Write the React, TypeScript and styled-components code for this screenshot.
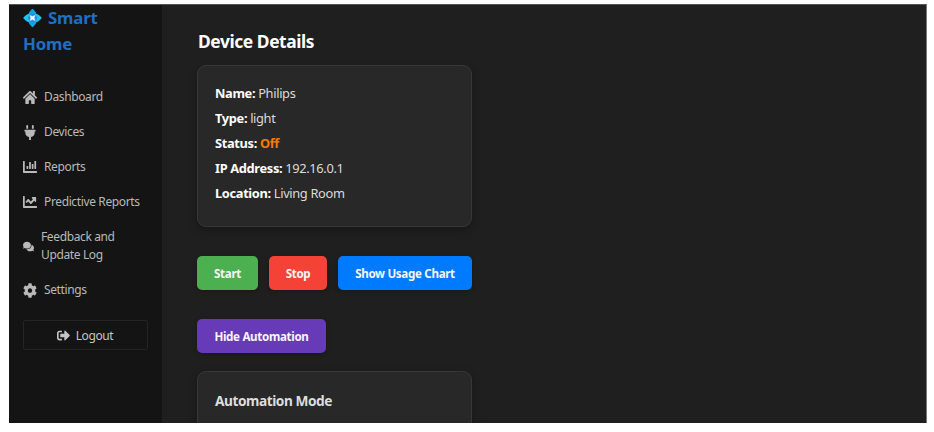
import React from "react";
import styled, { createGlobalStyle } from "styled-components";
import { FaHome, FaPlug, FaChartBar, FaChartLine, FaComments, FaCog, FaSignOutAlt } from "react-icons/fa";

const GlobalStyle = createGlobalStyle`
  * { box-sizing: border-box; }
  html, body { margin: 0; background: #fff; overflow: hidden; }
  body { font-family: "Noto Sans", sans-serif; font-size: 12px; color: #ddd; }
  h1, h2, h3, p { margin: 0; }
`;

const Frame = styled.div`
  width: 918px;
  height: 419px;
  margin: 4px 0 0 9px;
  display: flex;
  overflow: hidden;
  background: #1f1f1f;
  border-top: 1px solid #555;
  border-right: 1px solid #777;
`;

const Sidebar = styled.aside`
  width: 153px;
  flex: none;
  padding: 0 14px;
  background: #141414;
`;

const Brand = styled.h1`
  height: 52px;
  font-size: 16.8px;
  line-height: 26px;
  font-weight: 700;
  color: #1f6fc4;
  letter-spacing: -0.15px;
  svg { width: 19px; height: 20px; margin-right: 6px; vertical-align: -4px; }
`;

const Nav = styled.nav`
  display: flex;
  flex-direction: column;
  gap: 17px;
  margin-top: 31px;
`;

const NavItem = styled.a<{ $iconWidth?: number; $iconHeight?: number }>`
  display: flex;
  align-items: center;
  gap: 7px;
  color: #b9b9b9;
  font-size: 12px;
  letter-spacing: -0.37px;
  line-height: 18px;
  white-space: nowrap;
  svg {
    width: ${({ $iconWidth = 14 }) => $iconWidth}px;
    height: ${({ $iconHeight = 15 }) => $iconHeight}px;
    flex: none;
  }
`;

const Logout = styled.button`
  display: flex;
  align-items: center;
  justify-content: center;
  gap: 6px;
  width: 125px;
  height: 30px;
  margin-top: 21px;
  padding: 0 1px 0 0;
  border: 1px solid #242424;
  border-radius: 2px;
  background: #141414;
  color: #c4c4c4;
  font: 12px "Noto Sans", sans-serif;
  letter-spacing: -0.4px;
  svg { width: 13px; height: 13px; }
`;

const Content = styled.main`
  flex: 1;
  padding: 23px 0 0 35px;
`;

const Title = styled.h2`
  height: 37px;
  padding-left: 1px;
  color: #fff;
  font-size: 17.4px;
  letter-spacing: -0.42px;
  line-height: 26px;
  font-weight: 700;
`;

const Card = styled.section`
  width: 275px;
  height: 162px;
  padding: 15px 17px;
  background: #282828;
  border: 1px solid #373737;
  border-radius: 9px;
  box-shadow: 0 3px 9px rgba(0, 0, 0, 0.28);
`;

const Detail = styled.p`
  font-size: 12.85px;
  letter-spacing: -0.35px;
  line-height: 25px;
  color: #dcdcdc;
  strong { color: #fff; font-weight: 700; }
`;

const Status = styled.span`
  color: #f57c00;
  font-weight: 700;
`;

const Actions = styled.div`
  display: flex;
  gap: 11px;
  margin-top: 29px;
`;

const Button = styled.button<{ $color: string; $width: number }>`
  width: ${({ $width }) => $width}px;
  height: 34px;
  padding: 0;
  border: 0;
  border-radius: 5px;
  background: ${({ $color }) => $color};
  color: #f5f5f5;
  font: 700 11.6px "Noto Sans", sans-serif;
  letter-spacing: -0.32px;
  white-space: nowrap;
  box-shadow: 0 1px 4px rgba(0, 0, 0, 0.25);
`;

const AutomationCard = styled(Card)`
  margin-top: 18px;
`;

const CardTitle = styled.h3`
  color: #ddd;
  font-size: 13.7px;
  letter-spacing: -0.45px;
  line-height: 27px;
  font-weight: 700;
`;

const Diamond = () => (
  <svg viewBox="0 0 19 19" aria-hidden="true">
    <path d="M9.5 .3 Q10 .3 12.4 3.2 Q14.4 5.6 12.8 7.4 L9.5 9.5 L6.2 7.4 Q4.6 5.6 6.6 3.2 Q9 .3 9.5 .3 Z M9.5 18.7 Q9 18.7 6.6 15.8 Q4.6 13.4 6.2 11.6 L9.5 9.5 L12.8 11.6 Q14.4 13.4 12.4 15.8 Q10 18.7 9.5 18.7 Z" fill="#12a5df" />
    <path d="M.3 9.5 Q.3 9 3.2 6.6 Q5.6 4.6 7.4 6.2 L9.5 9.5 L7.4 12.8 Q5.6 14.4 3.2 12.4 Q.3 10 .3 9.5 Z M18.7 9.5 Q18.7 10 15.8 12.4 Q13.4 14.4 11.6 12.8 L9.5 9.5 L11.6 6.2 Q13.4 4.6 15.8 6.6 Q18.7 9 18.7 9.5 Z" fill="#21c3f5" />
    <circle cx="9.5" cy="9.5" r="4.3" fill="#2788df" />
    <path d="M6.9 6.9 L9.5 7.9 L12.1 6.9 L11.1 9.5 L12.1 12.1 L9.5 11.1 L6.9 12.1 L7.9 9.5 Z" fill="#fff" stroke="#d4efff" strokeWidth=".5" />
  </svg>
);

const details = [
  ["Name", "Philips"],
  ["Type", "light"],
  ["Status", "Off"],
  ["IP Address", "192.16.0.1"],
  ["Location", "Living Room"],
];

export default function App() {
  return (
    <>
      <GlobalStyle />
      <Frame>
        <Sidebar>
          <Brand><Diamond />Smart<br />Home</Brand>
          <Nav>
            <NavItem><FaHome preserveAspectRatio="none" />Dashboard</NavItem>
            <NavItem><FaPlug />Devices</NavItem>
            <NavItem $iconHeight={16}><FaChartBar preserveAspectRatio="none" />Reports</NavItem>
            <NavItem $iconHeight={16}><FaChartLine preserveAspectRatio="none" />Predictive Reports</NavItem>
            <NavItem $iconWidth={11} $iconHeight={11}>
              <FaComments preserveAspectRatio="none" />
              <span>Feedback and<br />Update Log</span>
            </NavItem>
            <NavItem><FaCog preserveAspectRatio="none" />Settings</NavItem>
          </Nav>
          <Logout><FaSignOutAlt />Logout</Logout>
        </Sidebar>
        <Content>
          <Title>Device Details</Title>
          <Card>
            {details.map(([label, value]) => (
              <Detail key={label}>
                <strong>{label}:</strong> {label === "Status" ? <Status>{value}</Status> : value}
              </Detail>
            ))}
          </Card>
          <Actions>
            <Button $color="#4caf50" $width={61}>Start</Button>
            <Button $color="#f44336" $width={58}>Stop</Button>
            <Button $color="#007bff" $width={134}>Show Usage Chart</Button>
          </Actions>
          <Actions>
            <Button $color="#673ab7" $width={129}>Hide Automation</Button>
          </Actions>
          <AutomationCard>
            <CardTitle>Automation Mode</CardTitle>
          </AutomationCard>
        </Content>
      </Frame>
    </>
  );
}
